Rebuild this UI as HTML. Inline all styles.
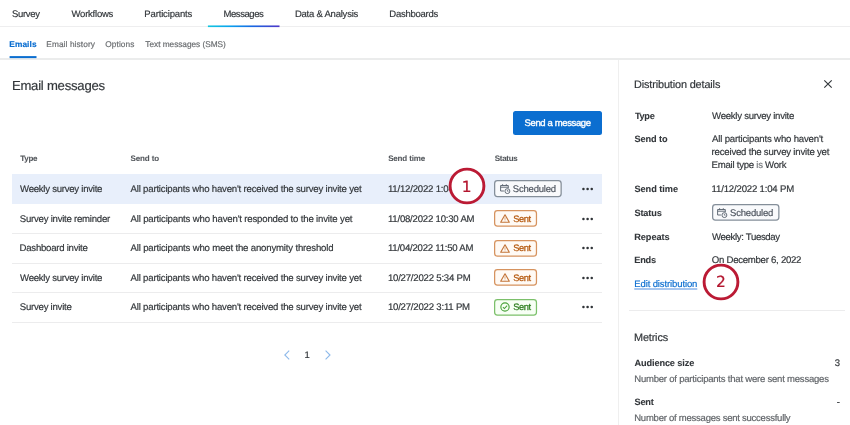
<!DOCTYPE html>
<html lang="en">
<head>
<meta charset="utf-8">
<title>Email messages</title>
<style>
*{box-sizing:border-box;margin:0;padding:0}
html,body{width:850px;height:425px;overflow:hidden;background:#fff}
body{font-family:"Liberation Sans",sans-serif;position:relative;color:#32363a;text-rendering:geometricPrecision}
#app{position:absolute;left:0;top:0;width:850px;height:425px;will-change:transform}
.t{-webkit-text-stroke:0.18px currentColor;position:absolute;line-height:1;white-space:nowrap;font-weight:400;font-style:normal;text-decoration:none;margin:0}
.t i{font-style:normal;color:#74787c}
.line{position:absolute;left:0;width:850px}
.topline{top:26px;height:1px;background:#eeeeef}
.subline{top:58px;height:2px;background:#ebecec}
.btn{position:absolute;left:513px;top:111px;width:89px;height:23.6px;background:#0b6ed0;border-radius:2.5px;border:0}
.rowbg{position:absolute;left:12px;top:174px;width:590px;height:30px;background:#e8effb}
.hr{position:absolute;left:12px;width:590px;height:1px;background:#ececed}
aside{position:absolute;left:618px;top:60px;width:232px;height:365px;border-left:1px solid #efefef;background:#fff}
.sep{position:absolute;left:629px;top:309.5px;width:216px;height:1px;background:#ececed}
svg{position:absolute;overflow:visible}
</style>
</head>
<body>
<div id="app">
<nav class="topnav">
<div class="line topline"></div>
<a class="t" style="left:11.91px;top:10.00px;font-size:9.5px;color:#32363a;letter-spacing:-0.282px;">Survey</a>
<a class="t" style="left:71.50px;top:10.00px;font-size:9.5px;color:#32363a;letter-spacing:-0.222px;">Workflows</a>
<a class="t" style="left:144.32px;top:10.00px;font-size:9.5px;color:#32363a;letter-spacing:-0.146px;">Participants</a>
<a class="t" style="left:223.41px;top:10.00px;font-size:9.5px;color:#32363a;letter-spacing:-0.408px;">Messages</a>
<a class="t" style="left:294.90px;top:10.00px;font-size:9.5px;color:#32363a;letter-spacing:-0.223px;">Data &amp; Analysis</a>
<a class="t" style="left:389.32px;top:10.00px;font-size:9.5px;color:#32363a;letter-spacing:-0.248px;">Dashboards</a>
<svg class="ind2" style="left:0;top:24px" width="300" height="4" viewBox="0 0 300 4"><defs><linearGradient id="tg" x1="0" x2="1" y1="0" y2="0"><stop offset="0" stop-color="#14c6de"/><stop offset="0.3" stop-color="#0aa3ee"/><stop offset="0.62" stop-color="#1868e2"/><stop offset="1" stop-color="#4f38c8"/></linearGradient></defs><rect x="207.9" y="1.45" width="71.6" height="1.65" fill="url(#tg)"/></svg>
</nav>
<nav class="subnav">
<div class="line subline"></div>
<a class="t" style="left:9.34px;top:40.00px;font-size:8.3px;font-weight:700;color:#0b6ed0;letter-spacing:0.084px;">Emails</a>
<a class="t" style="left:46.26px;top:40.00px;font-size:8.3px;color:#6a6d70;letter-spacing:0.096px;">Email history</a>
<a class="t" style="left:105.28px;top:40.00px;font-size:8.3px;color:#6a6d70;letter-spacing:0.080px;">Options</a>
<a class="t" style="left:145.36px;top:40.00px;font-size:8.3px;color:#6a6d70;letter-spacing:-0.039px;">Text messages (SMS)</a>
<svg class="ind2" style="left:0;top:54px" width="60" height="6" viewBox="0 0 60 6"><rect x="9.6" y="2.1" width="26.9" height="2" fill="#0b6ed0"/></svg>
</nav>
<main>
<h1 class="t" style="left:11.89px;top:79.00px;font-size:13.1px;color:#32363a;letter-spacing:-0.220px;">Email messages</h1>
<button class="btn"></button>
<span class="t" style="left:524.53px;top:119.00px;font-size:9.5px;color:#ffffff;letter-spacing:-0.369px;-webkit-text-stroke:0.35px #fff;">Send a message</span>
<section class="table">
<div class="t" style="left:20.29px;top:155.00px;font-size:8.0px;font-weight:700;color:#54585d;letter-spacing:-0.295px;-webkit-text-stroke-width:0.08px;">Type</div>
<div class="t" style="left:130.49px;top:155.00px;font-size:8.0px;font-weight:700;color:#54585d;letter-spacing:-0.114px;-webkit-text-stroke-width:0.08px;">Send to</div>
<div class="t" style="left:388.13px;top:155.00px;font-size:8.0px;font-weight:700;color:#54585d;letter-spacing:-0.149px;-webkit-text-stroke-width:0.08px;">Send time</div>
<div class="t" style="left:494.77px;top:155.00px;font-size:8.0px;font-weight:700;color:#54585d;letter-spacing:-0.313px;-webkit-text-stroke-width:0.08px;">Status</div>
<div class="rowbg"></div>
<div class="hr" style="top:233px"></div>
<div class="hr" style="top:263px"></div>
<div class="hr" style="top:292px"></div>
<div class="hr" style="top:322px"></div>
<div class="t" style="left:20.06px;top:185.00px;font-size:9.6px;color:#32363a;letter-spacing:-0.257px;">Weekly survey invite</div>
<div class="t" style="left:130.56px;top:185.00px;font-size:9.6px;color:#32363a;letter-spacing:-0.195px;">All participants who haven't received the survey invite yet</div>
<div class="t" style="left:387.90px;top:185.00px;font-size:9.6px;color:#32363a;letter-spacing:-0.196px;">11/12/2022 1:04 PM</div>
<div class="t" style="left:19.84px;top:215.00px;font-size:9.6px;color:#32363a;letter-spacing:-0.243px;">Survey invite reminder</div>
<div class="t" style="left:130.56px;top:215.00px;font-size:9.6px;color:#32363a;letter-spacing:-0.168px;">All participants who haven't responded to the invite yet</div>
<div class="t" style="left:387.90px;top:215.00px;font-size:9.6px;color:#32363a;letter-spacing:-0.213px;">11/08/2022 10:30 AM</div>
<div class="t" style="left:19.61px;top:244.00px;font-size:9.6px;color:#32363a;letter-spacing:-0.254px;">Dashboard invite</div>
<div class="t" style="left:130.56px;top:244.00px;font-size:9.6px;color:#32363a;letter-spacing:-0.171px;">All participants who meet the anonymity threshold</div>
<div class="t" style="left:387.90px;top:244.00px;font-size:9.6px;color:#32363a;letter-spacing:-0.232px;">11/04/2022 11:50 AM</div>
<div class="t" style="left:20.06px;top:274.00px;font-size:9.6px;color:#32363a;letter-spacing:-0.257px;">Weekly survey invite</div>
<div class="t" style="left:130.56px;top:274.00px;font-size:9.6px;color:#32363a;letter-spacing:-0.195px;">All participants who haven't received the survey invite yet</div>
<div class="t" style="left:387.90px;top:274.00px;font-size:9.6px;color:#32363a;letter-spacing:-0.208px;">10/27/2022 5:34 PM</div>
<div class="t" style="left:19.84px;top:303.00px;font-size:9.6px;color:#32363a;letter-spacing:-0.248px;">Survey invite</div>
<div class="t" style="left:130.56px;top:303.00px;font-size:9.6px;color:#32363a;letter-spacing:-0.195px;">All participants who haven't received the survey invite yet</div>
<div class="t" style="left:387.90px;top:303.00px;font-size:9.6px;color:#32363a;letter-spacing:-0.207px;">10/27/2022 3:11 PM</div>
<svg class="badge sch" style="left:493.20px;top:179.30px" width="69.80" height="19.20" viewBox="0 0 69.80 19.20"><rect x="1.625" y="1.625" width="66.550" height="15.950" rx="2.8" fill="#f9fafc" stroke="#848e99" stroke-width="1.25"/></svg>
<svg class="badge warn" style="left:493.20px;top:209.00px" width="45.10" height="18.80" viewBox="0 0 45.10 18.80"><rect x="1.625" y="1.625" width="41.850" height="15.550" rx="2.8" fill="#fffaf5" stroke="#d6935f" stroke-width="1.25"/></svg>
<svg class="badge warn" style="left:493.20px;top:238.60px" width="45.10" height="18.80" viewBox="0 0 45.10 18.80"><rect x="1.625" y="1.625" width="41.850" height="15.550" rx="2.8" fill="#fffaf5" stroke="#d6935f" stroke-width="1.25"/></svg>
<svg class="badge warn" style="left:493.20px;top:268.10px" width="45.10" height="18.80" viewBox="0 0 45.10 18.80"><rect x="1.625" y="1.625" width="41.850" height="15.550" rx="2.8" fill="#fffaf5" stroke="#d6935f" stroke-width="1.25"/></svg>
<svg class="badge ok" style="left:493.20px;top:297.70px" width="45.10" height="18.80" viewBox="0 0 45.10 18.80"><rect x="1.625" y="1.625" width="41.850" height="15.550" rx="2.8" fill="#f7fff5" stroke="#7cc06b" stroke-width="1.25"/></svg>
<svg style="left:500px;top:184.4px" width="10.5" height="10.5" viewBox="0 0 10.5 10.5"><g fill="none" stroke="#5d6672" stroke-width="0.95"><path d="M3.9 7H0.6V1.5H8.3V4.1M0.6 3.2H8.3M2.6 0.2V1.9M6.3 0.2V1.9"/><circle cx="7.4" cy="7.1" r="2.45"/><path d="M7.4 5.8V7.2H8.5" stroke-width="0.8"/></g></svg>
<svg style="left:500.2px;top:213.9px" width="10" height="9" viewBox="0 0 10 9"><g fill="none" stroke="#c4763a" stroke-width="1.15" stroke-linejoin="round"><path d="M5 0.8L9.3 8.2H0.7Z"/><path d="M5 3.3V5.8M5 6.6V7.3" stroke-width="0.85" stroke="#d39a6c"/></g></svg>
<svg style="left:500.2px;top:243.5px" width="10" height="9" viewBox="0 0 10 9"><g fill="none" stroke="#c4763a" stroke-width="1.15" stroke-linejoin="round"><path d="M5 0.8L9.3 8.2H0.7Z"/><path d="M5 3.3V5.8M5 6.6V7.3" stroke-width="0.85" stroke="#d39a6c"/></g></svg>
<svg style="left:500.2px;top:273px" width="10" height="9" viewBox="0 0 10 9"><g fill="none" stroke="#c4763a" stroke-width="1.15" stroke-linejoin="round"><path d="M5 0.8L9.3 8.2H0.7Z"/><path d="M5 3.3V5.8M5 6.6V7.3" stroke-width="0.85" stroke="#d39a6c"/></g></svg>
<svg style="left:500.2px;top:302.1px" width="10" height="10" viewBox="0 0 10 10"><g fill="none" stroke="#4aa23b" stroke-width="1.15"><circle cx="5" cy="5" r="4.15"/><path d="M2.9 5.2L4.4 6.6L7.1 3.6" stroke-width="1.05"/></g></svg>
<span class="t" style="left:512.84px;top:185.00px;font-size:9.5px;color:#4f5660;letter-spacing:-0.200px;">Scheduled</span>
<span class="t" style="left:513.13px;top:215.00px;font-size:9.3px;color:#b4560a;letter-spacing:-0.386px;-webkit-text-stroke-width:0.26px;">Sent</span>
<span class="t" style="left:513.13px;top:244.00px;font-size:9.3px;color:#b4560a;letter-spacing:-0.386px;-webkit-text-stroke-width:0.26px;">Sent</span>
<span class="t" style="left:513.13px;top:274.00px;font-size:9.3px;color:#b4560a;letter-spacing:-0.386px;-webkit-text-stroke-width:0.26px;">Sent</span>
<span class="t" style="left:513.13px;top:303.00px;font-size:9.3px;color:#2b7d1c;letter-spacing:-0.386px;-webkit-text-stroke-width:0.26px;">Sent</span>
<svg class="dots" style="left:582.3px;top:187.2px" width="11.4" height="4" viewBox="0 0 11.4 4"><circle cx="1.45" cy="2" r="1.27" fill="#2f3337"/><circle cx="5.6" cy="2" r="1.27" fill="#2f3337"/><circle cx="9.75" cy="2" r="1.27" fill="#2f3337"/></svg>
<svg class="dots" style="left:582.3px;top:216.7px" width="11.4" height="4" viewBox="0 0 11.4 4"><circle cx="1.45" cy="2" r="1.27" fill="#2f3337"/><circle cx="5.6" cy="2" r="1.27" fill="#2f3337"/><circle cx="9.75" cy="2" r="1.27" fill="#2f3337"/></svg>
<svg class="dots" style="left:582.3px;top:246.3px" width="11.4" height="4" viewBox="0 0 11.4 4"><circle cx="1.45" cy="2" r="1.27" fill="#2f3337"/><circle cx="5.6" cy="2" r="1.27" fill="#2f3337"/><circle cx="9.75" cy="2" r="1.27" fill="#2f3337"/></svg>
<svg class="dots" style="left:582.3px;top:275.9px" width="11.4" height="4" viewBox="0 0 11.4 4"><circle cx="1.45" cy="2" r="1.27" fill="#2f3337"/><circle cx="5.6" cy="2" r="1.27" fill="#2f3337"/><circle cx="9.75" cy="2" r="1.27" fill="#2f3337"/></svg>
<svg class="dots" style="left:582.3px;top:305.4px" width="11.4" height="4" viewBox="0 0 11.4 4"><circle cx="1.45" cy="2" r="1.27" fill="#2f3337"/><circle cx="5.6" cy="2" r="1.27" fill="#2f3337"/><circle cx="9.75" cy="2" r="1.27" fill="#2f3337"/></svg>
</section>
<div class="pager">
<svg style="left:284px;top:350.2px" width="6" height="10" viewBox="0 0 6 10"><path d="M5.2 0.6 L0.8 5 L5.2 9.4" fill="none" stroke="#8db9ea" stroke-width="1.1"/></svg>
<svg style="left:325px;top:350.2px" width="6" height="10" viewBox="0 0 6 10"><path d="M0.6 0.6 L5 5 L0.6 9.4" fill="none" stroke="#8db9ea" stroke-width="1.1"/></svg>
<span class="t" style="left:304.47px;top:351.00px;font-size:9.5px;color:#32363a;letter-spacing:0.000px;">1</span>
</div>
</main>
<aside></aside>
<section class="panel">
<svg style="left:824px;top:80px" width="8" height="8" viewBox="0 0 8 8"><path d="M0.3 0.3 L7.7 7.7 M7.7 0.3 L0.3 7.7" fill="none" stroke="#33373b" stroke-width="1.15"/></svg>
<svg class="badge sch" style="left:710.50px;top:203.20px" width="69.50" height="18.80" viewBox="0 0 69.50 18.80"><rect x="1.625" y="1.625" width="66.250" height="15.550" rx="2.8" fill="#f9fafc" stroke="#848e99" stroke-width="1.25"/></svg>
<svg style="left:717.4px;top:208.2px" width="10.5" height="10.5" viewBox="0 0 10.5 10.5"><g fill="none" stroke="#5d6672" stroke-width="0.95"><path d="M3.9 7H0.6V1.5H8.3V4.1M0.6 3.2H8.3M2.6 0.2V1.9M6.3 0.2V1.9"/><circle cx="7.4" cy="7.1" r="2.45"/><path d="M7.4 5.8V7.2H8.5" stroke-width="0.8"/></g></svg>
<div class="sep"></div>
<h2 class="t" style="left:634.03px;top:80.00px;font-size:10.9px;color:#32363a;letter-spacing:-0.140px;">Distribution details</h2>
<div class="t" style="left:634.93px;top:112.00px;font-size:9.2px;font-weight:700;color:#32363a;letter-spacing:-0.296px;-webkit-text-stroke-width:0.08px;">Type</div>
<div class="t" style="left:634.48px;top:135.00px;font-size:9.2px;font-weight:700;color:#32363a;letter-spacing:-0.098px;-webkit-text-stroke-width:0.08px;">Send to</div>
<div class="t" style="left:634.48px;top:185.00px;font-size:9.2px;font-weight:700;color:#32363a;letter-spacing:-0.045px;-webkit-text-stroke-width:0.08px;">Send time</div>
<div class="t" style="left:634.48px;top:209.00px;font-size:9.2px;font-weight:700;color:#32363a;letter-spacing:-0.157px;-webkit-text-stroke-width:0.08px;">Status</div>
<div class="t" style="left:634.26px;top:233.00px;font-size:9.2px;font-weight:700;color:#32363a;letter-spacing:-0.070px;-webkit-text-stroke-width:0.08px;">Repeats</div>
<div class="t" style="left:634.26px;top:256.00px;font-size:9.2px;font-weight:700;color:#32363a;letter-spacing:-0.207px;-webkit-text-stroke-width:0.08px;">Ends</div>
<div class="t" style="left:712.07px;top:112.00px;font-size:9.6px;color:#32363a;letter-spacing:-0.265px;">Weekly survey invite</div>
<div class="t" style="left:712.07px;top:135.00px;font-size:9.6px;color:#32363a;letter-spacing:-0.176px;">All participants who haven't</div>
<div class="t" style="left:711.62px;top:148.00px;font-size:9.6px;color:#32363a;letter-spacing:-0.205px;">received the survey invite yet</div>
<div class="t" style="left:711.62px;top:161.00px;font-size:9.6px;color:#32363a;letter-spacing:-0.254px;">Email type <i>is</i> Work</div>
<div class="t" style="left:711.62px;top:185.00px;font-size:9.6px;color:#32363a;letter-spacing:-0.182px;">11/12/2022 1:04 PM</div>
<span class="t" style="left:730.05px;top:209.00px;font-size:9.5px;color:#4f5660;letter-spacing:-0.200px;">Scheduled</span>
<div class="t" style="left:712.07px;top:233.00px;font-size:9.6px;color:#32363a;letter-spacing:-0.345px;">Weekly: Tuesday</div>
<div class="t" style="left:711.84px;top:256.00px;font-size:9.6px;color:#32363a;letter-spacing:-0.266px;">On December 6, 2022</div>
<a class="t" style="left:634.26px;top:280.00px;font-size:9.5px;color:#0b6ed0;letter-spacing:-0.113px;text-decoration:underline;text-underline-offset:1.3px;text-decoration-thickness:1.9px;text-decoration-color:#a7c7f0;">Edit distribution</a>
<h3 class="t" style="left:634.03px;top:333.00px;font-size:10.9px;color:#32363a;letter-spacing:-0.168px;">Metrics</h3>
<div class="t" style="left:634.48px;top:359.00px;font-size:9.2px;font-weight:700;color:#32363a;letter-spacing:-0.121px;-webkit-text-stroke-width:0.08px;">Audience size</div>
<div class="t" style="left:834.77px;top:359.00px;font-size:9.5px;color:#32363a;letter-spacing:0.000px;">3</div>
<div class="t" style="left:634.26px;top:375.00px;font-size:9.5px;color:#606468;letter-spacing:-0.203px;">Number of participants that were sent messages</div>
<div class="t" style="left:634.48px;top:398.00px;font-size:9.2px;font-weight:700;color:#32363a;letter-spacing:-0.180px;-webkit-text-stroke-width:0.08px;">Sent</div>
<div class="t" style="left:836.77px;top:398.00px;font-size:9.5px;color:#32363a;letter-spacing:0.000px;">-</div>
<div class="t" style="left:634.26px;top:414.00px;font-size:9.5px;color:#606468;letter-spacing:-0.239px;">Number of messages sent successfully</div>
</section>
<svg class="callout" style="left:447.60px;top:167.00px" width="38" height="38" viewBox="0 0 38 38"><circle cx="19" cy="19" r="16.9" fill="#fff" stroke="#bb1a34" stroke-width="2.9"/></svg>
<svg class="callout" style="left:701.60px;top:262.75px" width="38" height="38" viewBox="0 0 38 38"><circle cx="19" cy="19" r="16.9" fill="#fff" stroke="#bb1a34" stroke-width="2.9"/></svg>
<span class="t" style="left:461.71px;top:180.00px;font-size:15.4px;color:#b3152e;letter-spacing:0.000px;font-family:'DejaVu Sans','Liberation Sans',sans-serif;-webkit-text-stroke-width:0.22px;">1</span>
<span class="t" style="left:716.02px;top:275.00px;font-size:15.4px;color:#b3152e;letter-spacing:0.000px;font-family:'DejaVu Sans','Liberation Sans',sans-serif;-webkit-text-stroke-width:0.22px;">2</span>
</div>
</body>
</html>
